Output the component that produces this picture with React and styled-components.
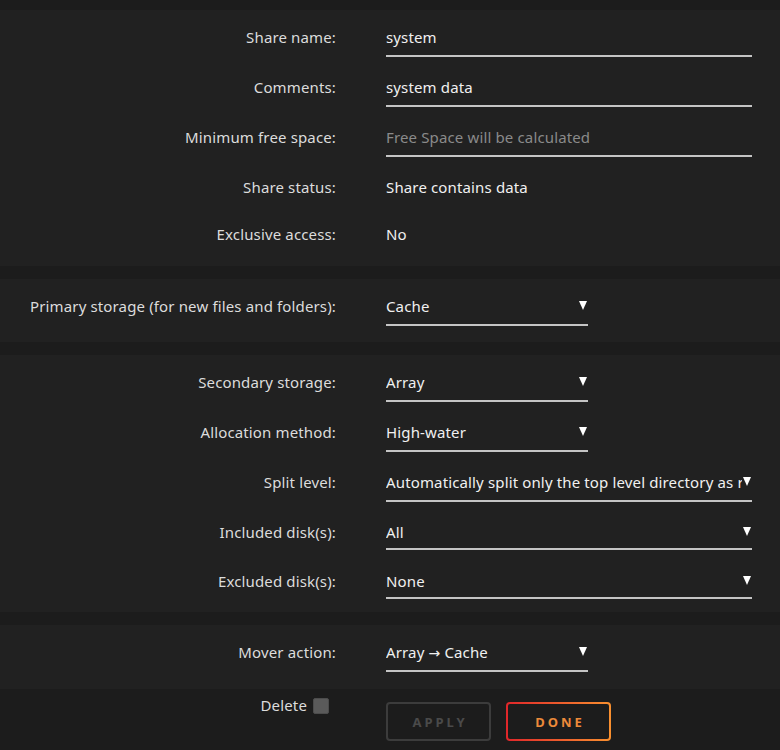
import styled, { createGlobalStyle } from 'styled-components'

const GlobalStyle = createGlobalStyle`
    body {
        margin: 0;
        background: #1c1c1c;
        font-family: "Noto Sans", "Open Sans", sans-serif;
        font-size: 15px;
        letter-spacing: 0.14px;
    }
`;

const Page = styled.div`
    padding-top: 10px;
    display: flex;
    flex-direction: column;
    gap: 13px;
`;

const Panel = styled.section`
    background: #212121;
    padding: 12px 0 ${(p) => p.$pb || 0}px;
`;

const Row = styled.div`
    display: grid;
    grid-template-columns: 336px ${(p) => (p.$narrow ? '202px' : '366px')};
    column-gap: 50px;
    align-items: start;
    height: ${(p) => p.$h || 50}px;
`;

const Label = styled.div`
    text-align: right;
    color: #dcdcdc;
    line-height: 24px;
    padding-top: 3px;
    white-space: nowrap;
`;

const Value = styled.div`
    color: #f0f0f0;
    line-height: 24px;
    padding-top: 3px;
`;

const Field = styled.div`
    position: relative;
    box-sizing: border-box;
    height: ${(p) => p.$fh || 35}px;
    padding: 3px ${(p) => (p.$select ? '10px' : '0')} 0 0;
    line-height: 24px;
    border-bottom: 2px solid #c4c4c4;
    color: ${(p) => (p.$placeholder ? '#8a8a8a' : '#f0f0f0')};
`;

const FieldText = styled.span`
    display: block;
    white-space: nowrap;
    overflow: hidden;
`;

const ArrowGlyph = styled.span`
    font-family: "DejaVu Sans", sans-serif;
    font-size: 14px;
`;

const Arrow = styled.svg`
    position: absolute;
    right: 1px;
    top: 10px;
    width: 8px;
    height: 9px;
    fill: #ffffff;
`;

const Footer = styled.div`
    display: grid;
    grid-template-columns: 336px auto;
    column-gap: 50px;
    margin-top: -13px;
    padding-top: 6px;
`;

const DeleteBox = styled.label`
    display: flex;
    justify-content: flex-end;
    align-items: flex-start;
    gap: 6px;
    padding-right: 7px;
    color: #dcdcdc;
    line-height: 20px;
`;

const Check = styled.span`
    margin-top: 3px;
    width: 16px;
    height: 16px;
    box-sizing: border-box;
    border-radius: 2px;
    background: #5a5a5a;
    border: 1px solid #4c4c4c;
`;

const Buttons = styled.div`
    display: flex;
    gap: 15px;
    padding-top: 7px;
`;

const Button = styled.button`
    width: 105px;
    height: 39px;
    box-sizing: border-box;
    border-radius: 4px;
    font-family: "Noto Sans", "Open Sans", sans-serif;
    font-size: 13px;
    font-weight: 700;
    letter-spacing: 3px;
    padding: 0 0 0 3px;
    cursor: pointer;
    border: 2px solid ${(p) => (p.$primary ? 'transparent' : '#3c3c3c')};
    color: ${(p) => (p.$primary ? '#ec8a3a' : '#4a4a4a')};
    background: ${(p) =>
        p.$primary
            ? 'linear-gradient(#1c1c1c, #1c1c1c) padding-box, linear-gradient(90deg, #e0262a, #f9902f) border-box'
            : '#1c1c1c'};
`;

const Select = ({ children, fh }) => (
    <Field $select $fh={fh}>
        <FieldText>{children}</FieldText>
        <Arrow viewBox="0 0 8 9">
            <polygon points="0,0 8,0 4,9" />
        </Arrow>
    </Field>
);

const App = () => {
    return (
        <Page>
            <GlobalStyle />
            <Panel>
                <Row>
                    <Label>Share name:</Label>
                    <Field>system</Field>
                </Row>
                <Row>
                    <Label>Comments:</Label>
                    <Field>system data</Field>
                </Row>
                <Row>
                    <Label>Minimum free space:</Label>
                    <Field $placeholder>Free Space will be calculated</Field>
                </Row>
                <Row $h={47}>
                    <Label>Share status:</Label>
                    <Value>Share contains data</Value>
                </Row>
                <Row $h={47}>
                    <Label>Exclusive access:</Label>
                    <Value>No</Value>
                </Row>
            </Panel>

            <Panel $pb={1}>
                <Row $narrow>
                    <Label>Primary storage (for new files and folders):</Label>
                    <Select>Cache</Select>
                </Row>
            </Panel>

            <Panel>
                <Row $narrow>
                    <Label>Secondary storage:</Label>
                    <Select>Array</Select>
                </Row>
                <Row $narrow>
                    <Label>Allocation method:</Label>
                    <Select>High-water</Select>
                </Row>
                <Row>
                    <Label>Split level:</Label>
                    <Select>Automatically split only the top level directory as required</Select>
                </Row>
                <Row $h={49}>
                    <Label>Included disk(s):</Label>
                    <Select fh={33}>All</Select>
                </Row>
                <Row $h={46}>
                    <Label>Excluded disk(s):</Label>
                    <Select fh={33}>None</Select>
                </Row>
            </Panel>

            <Panel $pb={2}>
                <Row $narrow>
                    <Label>Mover action:</Label>
                    <Select>
                        Array <ArrowGlyph>→</ArrowGlyph> Cache
                    </Select>
                </Row>
            </Panel>

            <Footer>
                <DeleteBox>
                    Delete
                    <Check />
                </DeleteBox>
                <Buttons>
                    <Button>APPLY</Button>
                    <Button $primary>DONE</Button>
                </Buttons>
            </Footer>
        </Page>
    );
};

export default App;
